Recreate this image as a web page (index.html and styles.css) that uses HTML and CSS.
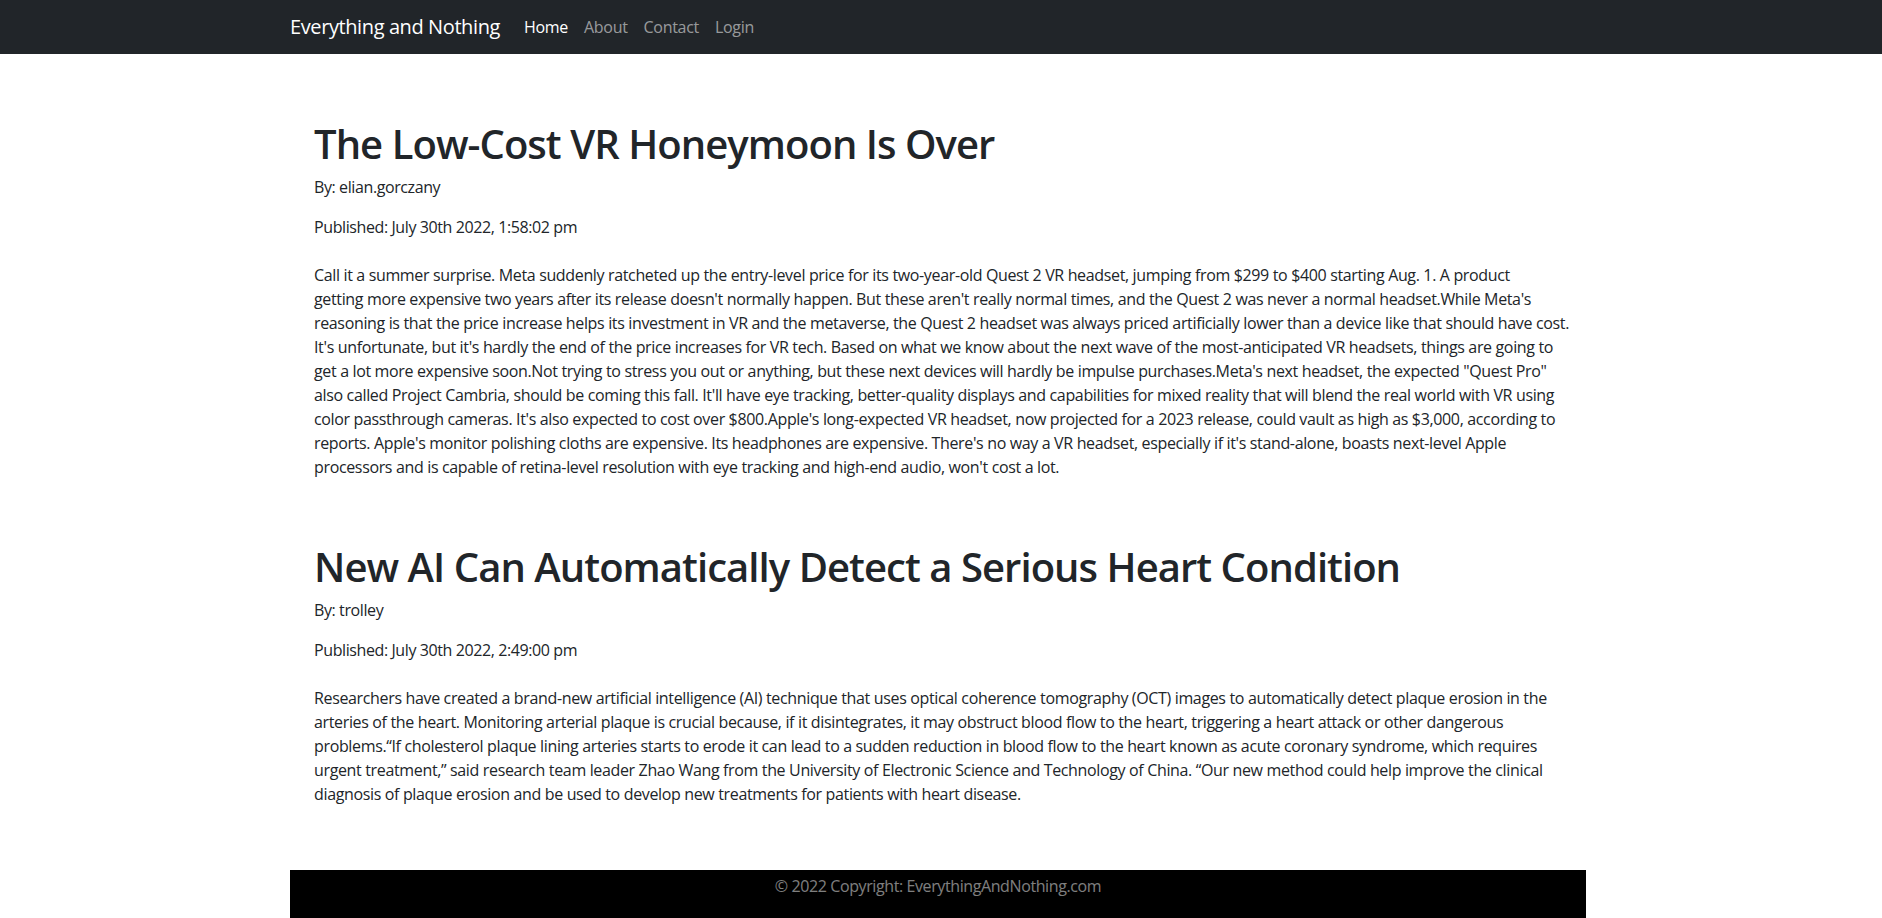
FILE: index.html
```html
<!DOCTYPE html>
<html lang="en">
<head>
<meta charset="utf-8">
<title>Everything and Nothing</title>
<link rel="stylesheet" href="styles.css">
</head>
<body>
<nav class="navbar">
  <div class="container nav-inner">
    <a class="brand" href="#">Everything and Nothing</a>
    <ul class="nav-links">
      <li><a class="nav-link active" href="#">Home</a></li>
      <li><a class="nav-link" href="#">About</a></li>
      <li><a class="nav-link" href="#">Contact</a></li>
      <li><a class="nav-link" href="#">Login</a></li>
    </ul>
  </div>
</nav>

<div class="container">
  <main class="posts">
    <article class="post">
      <h1 class="post-title">The Low-Cost VR Honeymoon Is Over</h1>
      <p class="post-meta">By: elian.gorczany</p>
      <p class="post-meta">Published: July 30th 2022, 1:58:02 pm</p>
      <p class="post-body">Call it a summer surprise. Meta suddenly ratcheted up the entry-level price for its two-year-old Quest 2 VR headset, jumping from $299 to $400 starting Aug. 1. A product<br>getting more expensive two years after its release doesn't normally happen. But these aren't really normal times, and the Quest 2 was never a normal headset.While Meta's reasoning is that the price increase helps its investment in VR and the metaverse, the Quest 2 headset was always priced artificially lower than a device like that should have cost. It's unfortunate, but it's hardly the end of the price increases for VR tech. Based on what we know about the next wave of the most-anticipated VR headsets, things are going to get a lot more expensive soon.Not trying to stress you out or anything, but these next devices will hardly be impulse purchases.Meta's next headset, the expected "Quest Pro" also called Project Cambria, should be coming this fall. It'll have eye tracking, better-quality displays and capabilities for mixed reality that will blend the real world with VR using color passthrough cameras. It's also expected to cost over $800.Apple's long-expected VR headset, now projected for a 2023 release, could vault as high as $3,000, according to reports. Apple's monitor polishing cloths are expensive. Its headphones are expensive. There's no way a VR headset, especially if it's stand-alone, boasts next-level Apple processors and is capable of retina-level resolution with eye tracking and high-end audio, won't cost a lot.</p>
    </article>
    <article class="post">
      <h1 class="post-title">New AI Can Automatically Detect a Serious Heart Condition</h1>
      <p class="post-meta">By: trolley</p>
      <p class="post-meta">Published: July 30th 2022, 2:49:00 pm</p>
      <p class="post-body">Researchers have created a brand-new artificial intelligence (AI) technique that uses optical coherence tomography (OCT) images to automatically detect plaque erosion in the arteries of the heart. Monitoring arterial plaque is crucial because, if it disintegrates, it may obstruct blood flow to the heart, triggering a heart attack or other dangerous problems.“If cholesterol plaque lining arteries starts to erode it can lead to a sudden reduction in blood flow to the heart known as acute coronary syndrome, which requires urgent treatment,” said research team leader Zhao Wang from the University of Electronic Science and Technology of China. “Our new method could help improve the clinical diagnosis of plaque erosion and be used to develop new treatments for patients with heart disease.</p>
    </article>
  </main>
  <footer class="site-footer">© 2022 Copyright: EverythingAndNothing.com</footer>
</div>
</body>
</html>
```
FILE: styles.css
```css
* { box-sizing: border-box; }

html, body {
  margin: 0;
  padding: 0;
}

body {
  font-family: "Open Sans", "Noto Sans", sans-serif;
  font-size: 16px;
  line-height: 24px;
  color: #212529;
  background: #fff;
}

.container {
  width: 1320px;
  margin: 0 auto;
  padding: 0 15px 0 9px;
}

/* Navbar */
.navbar {
  background: #212529;
  height: 54px;
}

.nav-inner {
  display: flex;
  align-items: center;
  height: 100%;
}

.brand {
  color: #fff;
  text-decoration: none;
  font-size: 20px;
  line-height: 30px;
  letter-spacing: -0.4px;
  margin-right: 16px;
}

.nav-links {
  display: flex;
  list-style: none;
  margin: 0;
  padding: 0;
}

.nav-link {
  display: block;
  padding: 8px;
  color: rgba(255, 255, 255, 0.55);
  text-decoration: none;
  font-size: 16px;
  letter-spacing: -0.3px;
}

.nav-link.active {
  color: #fff;
}

/* Posts */
.posts {
  padding: 18px 16px 0 24px;
}

.post {
  padding-top: 48px;
}

.post-title {
  margin: 0 0 7px;
  font-size: 40px;
  line-height: 48px;
  font-weight: 600;
  letter-spacing: -0.95px;
}

.post-meta {
  margin: 0 0 16px;
  letter-spacing: -0.4px;
}

.post-body {
  margin: 24px 0 16px;
  letter-spacing: -0.35px;
}

/* Footer */
.site-footer {
  margin-top: 64px;
  background: #000;
  color: rgba(255, 255, 255, 0.5);
  text-align: center;
  padding: 4px 0 28px;
  letter-spacing: -0.4px;
}
```
